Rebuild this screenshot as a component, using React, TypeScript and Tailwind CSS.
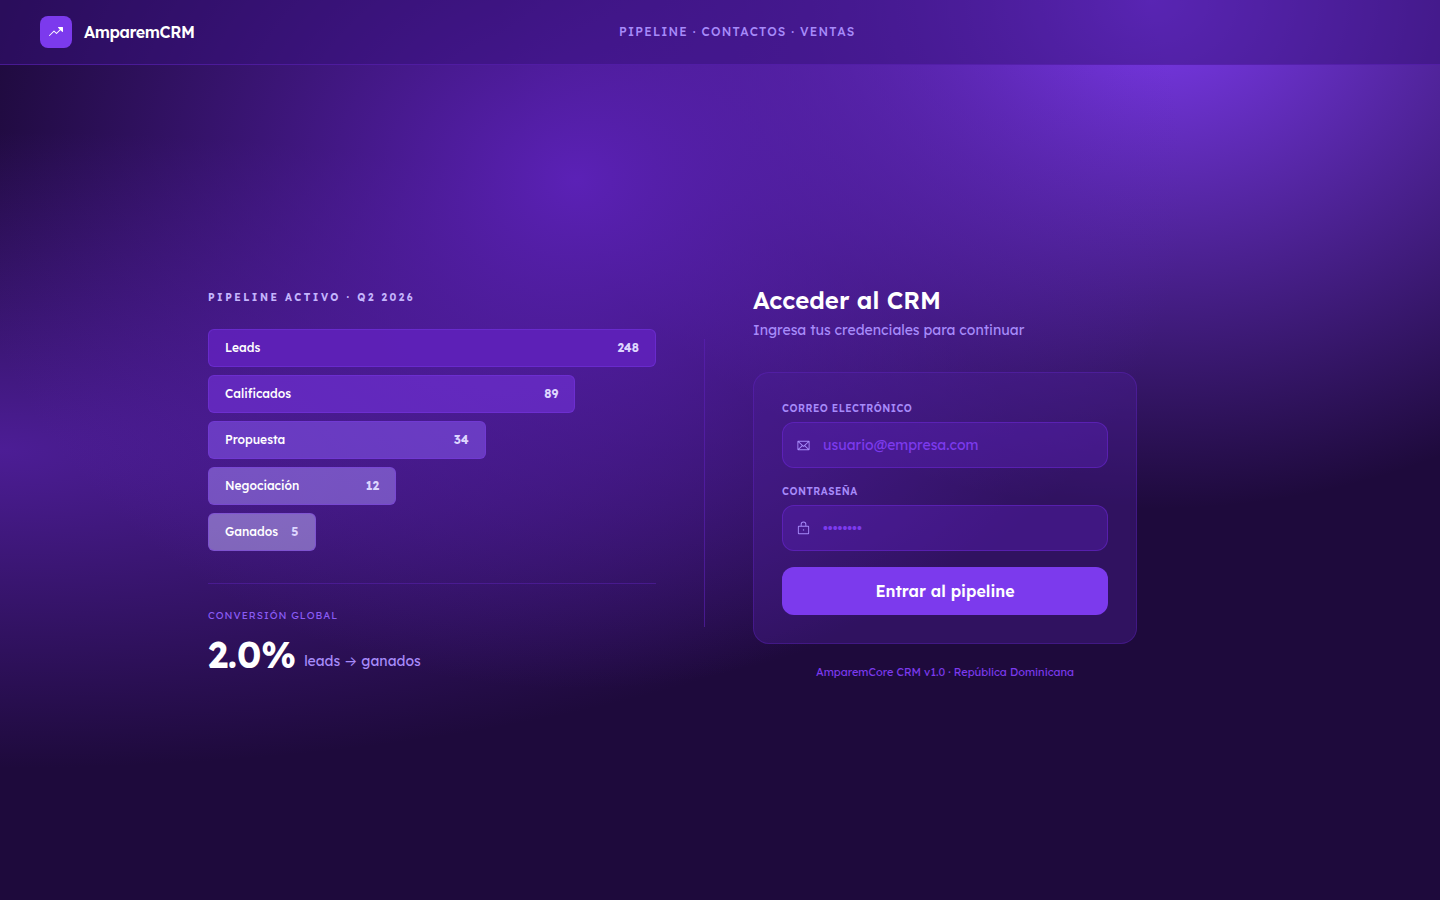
import type { FormEvent, ReactNode } from "react";
import { PiEnvelope, PiLock, PiTrendUpFill } from "react-icons/pi";

type Stage = { label: string; count: number; width: string; fill: string };

const stages: Stage[] = [
  { label: "Leads", count: 248, width: "w-full", fill: "bg-[#5f21ba]/90" },
  { label: "Calificados", count: 89, width: "w-[82%]", fill: "bg-[#6d2fd0]/70" },
  { label: "Propuesta", count: 34, width: "w-[62%]", fill: "bg-[#8b5cf6]/50" },
  { label: "Negociación", count: 12, width: "w-[42%]", fill: "bg-[#a78bfa]/50" },
  { label: "Ganados", count: 5, width: "w-[24%]", fill: "bg-[#c4b5fd]/50" },
];

function Header() {
  return (
    <header className="flex items-center justify-between border-b border-[#5b21b6]/60 bg-[#35107a]/50 px-10 py-4">
      <div className="flex items-center gap-3">
        <div className="flex size-8 items-center justify-center rounded-lg bg-[#7c3aed] text-white">
          <PiTrendUpFill className="size-4" />
        </div>
        <span className="text-base leading-6 font-semibold tracking-tight text-white">
          AmparemCRM
        </span>
      </div>
      <span className="text-xs font-medium tracking-widest text-[#a78bfa] uppercase">
        Pipeline · Contactos · Ventas
      </span>
      <div className="w-30" />
    </header>
  );
}

function Pipeline() {
  return (
    <section className="w-full max-w-md">
      <h2 className="mb-6 text-[10px] leading-[15px] font-bold tracking-[0.25em] text-[#c4b5fd] uppercase">
        Pipeline activo · Q2 2026
      </h2>
      <ul className="flex flex-col gap-2">
        {stages.map((stage) => (
          <li
            key={stage.label}
            className={`flex items-center justify-between rounded-md border border-[#7c3aed]/40 px-4 py-2 text-xs leading-5 ${stage.width} ${stage.fill}`}
          >
            <span className="font-medium text-white">{stage.label}</span>
            <span className="font-bold text-[#ddd6fe]">{stage.count}</span>
          </li>
        ))}
      </ul>
      <div className="mt-8 border-t border-[#5b21b6]/50 pt-6">
        <p className="text-[10px] leading-[15px] tracking-widest text-[#8b5cf6] uppercase">
          Conversión global
        </p>
        <p className="mt-3 flex items-end gap-2">
          <span className="text-4xl font-bold text-white">2.0%</span>
          <span className="mb-1 text-sm text-[#a78bfa]">leads → ganados</span>
        </p>
      </div>
    </section>
  );
}

type FieldProps = {
  id: string;
  label: string;
  type: string;
  placeholder: string;
  icon: ReactNode;
};

function Field({ id, label, type, placeholder, icon }: FieldProps) {
  return (
    <div>
      <label
        htmlFor={id}
        className="mb-1.5 block text-[10px] leading-[15px] font-semibold tracking-wider text-[#a78bfa] uppercase"
      >
        {label}
      </label>
      <div className="flex items-center gap-3 rounded-xl border border-[#6d28d9]/50 bg-[#5b21b6]/40 px-[13px]">
        <span className="text-[#a78bfa]">{icon}</span>
        <input
          id={id}
          type={type}
          placeholder={placeholder}
          className="h-11 min-w-0 flex-1 bg-transparent text-sm text-white outline-none placeholder:text-[#7c3aed]"
        />
      </div>
    </div>
  );
}

function Login() {
  const submit = (event: FormEvent) => event.preventDefault();
  return (
    <section className="flex-1">
      <div className="max-w-sm">
        <h1 className="text-2xl font-semibold text-white">Acceder al CRM</h1>
        <p className="mt-1 text-sm text-[#a78bfa]">Ingresa tus credenciales para continuar</p>
        <form
          onSubmit={submit}
          className="mt-8 flex flex-col gap-4 rounded-2xl border border-[#6d28d9]/30 bg-[#4c1d95]/40 p-7"
        >
          <Field
            id="email"
            label="Correo electrónico"
            type="email"
            placeholder="usuario@empresa.com"
            icon={<PiEnvelope className="size-[15px]" />}
          />
          <Field
            id="password"
            label="Contraseña"
            type="password"
            placeholder="••••••••"
            icon={<PiLock className="size-[15px]" />}
          />
          <button
            type="submit"
            className="h-12 rounded-xl bg-[#7c3aed] text-base font-semibold text-white"
          >
            Entrar al pipeline
          </button>
        </form>
        <p className="mt-5 text-center text-[11px] leading-[17px] text-[#7c3aed]">
          AmparemCore CRM v1.0 · República Dominicana
        </p>
      </div>
    </section>
  );
}

export default function App() {
  return (
    <div className="flex min-h-screen flex-col bg-[#1e0a3c] bg-[radial-gradient(at_40%_20%,#5b21b6_0px,transparent_50%),radial-gradient(at_80%_0%,#7c3aed_0px,transparent_40%),radial-gradient(at_0%_50%,#4c1d95_0px,transparent_50%)] font-[Lexend,Inter,sans-serif]">
      <Header />
      <main className="flex flex-1 items-center justify-center px-6">
        <div className="flex w-full max-w-5xl items-center gap-12">
          <Pipeline />
          <div className="h-72 w-px shrink-0 bg-[#5b21b6]/60" />
          <Login />
        </div>
      </main>
    </div>
  );
}
